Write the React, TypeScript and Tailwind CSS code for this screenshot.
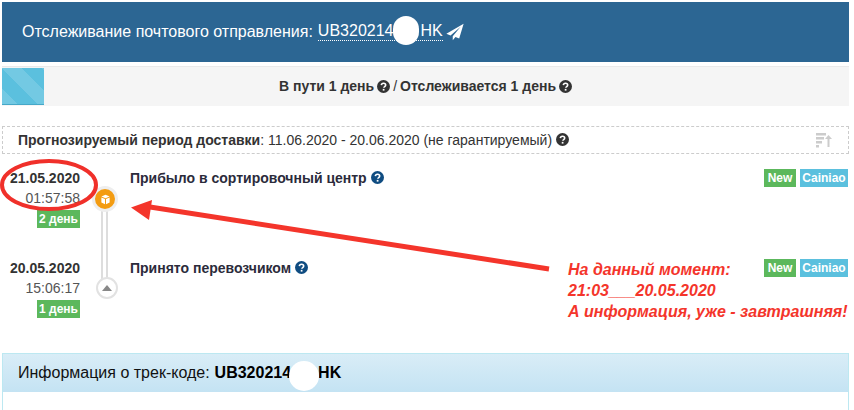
function Help({ className = 'text-[#333]' }: { className?: string }) {
  return (
    <svg viewBox="0 0 24 24" className={`inline-block w-[13px] h-[13px] align-[-1px] ${className}`}>
      <circle cx="12" cy="12" r="12" fill="currentColor" />
      <path d="M8 9.5a4 4 0 0 1 4-3.5c2.4 0 4 1.500 4 3.400 0 2.800-3.300 2.800-3.300 5" fill="none" stroke="#fff" strokeWidth="3" />
      <rect x="10.600" y="16.400" width="3.200" height="3.200" fill="#fff" />
    </svg>
  );
}

function Blot({ className }: { className: string }) {
  return <span className={`absolute rounded-full bg-white ${className}`} />;
}

function Tags() {
  return (
    <div className="flex gap-[4px] mr-[1px] text-[12px] leading-[18px] font-bold text-white">
      <span className="bg-[#5cb85c] w-[32px] text-center">New</span>
      <span className="bg-[#5bc0de] w-[48px] text-center">Cainiao</span>
    </div>
  );
}

const EVENTS = [
  { date: '21.05.2020', time: '01:57:58', days: '2 день', title: 'Прибыло в сортировочный центр' },
  { date: '20.05.2020', time: '15:06:17', days: '1 день', title: 'Принято перевозчиком' },
];

export default function App() {
  return (
    <div className="relative w-[854px] h-[410px] overflow-hidden bg-white font-['Liberation_Sans',Arial,sans-serif] text-[#333] pl-[2px] pr-[5px] pt-[2px]">
      {/* Header */}
      <div className="relative h-[60px] bg-[#2c6693] flex items-center pl-[20px] pb-[1px] text-[16px] text-white">
        <span>Отслеживание почтового отправления:</span>
        <span className="ml-[5px] border-b border-dotted border-white leading-[18px]">UB320214<span className="inline-block w-[27px]" />HK</span>
        <svg viewBox="0 0 24 24" className="ml-[3px] w-[18px] h-[18px]" fill="#fff">
          <path d="M23.500 1L.5 14.200l5.500 2.300L19.500 5 9 17.800V23l3.600-4.300 5 2.100z" />
        </svg>
        <Blot className="left-[391px] top-[14px] w-[26px] h-[29px]" />
      </div>

      {/* Status strip */}
      <div className="mt-[4px] h-[40px] bg-[#f5f5f5] border-t border-[#eaeaea] flex">
        <div className="w-[42px] mt-[1px] h-[37px] border-b border-[#46a8c8] bg-[#5bc0de] bg-[linear-gradient(45deg,#73c9e3_25%,transparent_25%,transparent_50%,#73c9e3_50%,#73c9e3_75%,transparent_75%)] bg-[length:40px_40px]" />
        <div className="flex-1 flex items-center justify-center text-[14px] font-bold pr-[42px] gap-[3px]">
          <span>В пути 1 день</span>
          <Help />
          <span className="font-normal">/</span>
          <span>Отслеживается 1 день</span>
          <Help />
        </div>
      </div>

      {/* Forecast */}
      <div className="mt-[20px] h-[28px] border border-dashed border-[#ccc] flex items-center justify-between pl-[15px] pr-[16px] text-[14px]">
        <span>
          <b>Прогнозируемый период доставки</b>: 11.06.2020 - 20.06.2020 (не гарантируемый) <Help />
        </span>
        <svg viewBox="0 0 16 16" className="w-[16px] h-[16px] text-[#ccc]" fill="currentColor">
          <rect x="0" y="1" width="10" height="2.500" />
          <rect x="0" y="5" width="8" height="2.500" />
          <rect x="0" y="9" width="6" height="2.500" />
          <rect x="0" y="13" width="3" height="2.500" />
          <path d="M12.500 3l3.500 4h-2.500v8h-2V7H9z" />
        </svg>
      </div>

      {/* Timeline */}
      <div className="mt-[14px] relative">
        <div className="absolute left-[99px] top-[40px] w-[7px] h-[74px] border-x-2 border-[#ddd] bg-white" />
        {EVENTS.map((e, i) => (
          <div key={e.date} className="flex h-[90px]">
            <div className="w-[78px] text-right text-[14px] leading-[20px]">
              <div className="font-bold">{e.date}</div>
              <div className="text-[#555]">{e.time}</div>
              <div className="flex justify-end mt-[2px]">
                <span className="bg-[#5cb85c] text-white font-bold text-[12px] leading-[18px] w-[43px] text-center">{e.days}</span>
              </div>
            </div>
            <div className="w-[50px] relative">
              {i === 0 ? (
                <span className="absolute top-[18px] left-[12px] w-[20px] h-[20px] rounded-full bg-[#f39c12] border-[3px] border-[#eee] box-content flex items-center justify-center">
                  <svg viewBox="0 0 16 16" className="w-[11px] h-[11px]" fill="#fff">
                    <path d="M8 1l6 2.600L8 6.200 2 3.600zM2 5l5.300 2.300V15L2 12.500zM14 5L8.700 7.300V15l5.300-2.500z" />
                  </svg>
                </span>
              ) : (
                <span className="absolute top-[19px] left-[16px] w-[18px] h-[18px] rounded-full bg-white border-[2px] border-[#e2e2e2] box-content flex items-center justify-center">
                  <span className="w-0 h-0 border-x-[5px] border-x-transparent border-b-[6px] border-b-[#888] -mt-[1px]" />
                </span>
              )}
            </div>
            <div className="flex-1 flex justify-between items-start pt-[1px]">
              <span className="text-[14px] font-bold leading-[18px] text-[#2b2b3b]">
                {e.title} <Help className="text-[#0f4c81]" />
              </span>
              <Tags />
            </div>
          </div>
        ))}
      </div>

      {/* Track info panel */}
      <div className="mt-[5px] border border-[#bce8f1] border-b-0 h-[60px]">
        <div className="relative h-[38px] bg-[linear-gradient(#d9edf7,#c4e3f3)] flex items-center pl-[15px] pb-[1px] text-[16px] text-[#111]">
          <span>Информация о трек-коде:</span>
          <b className="ml-[5px] text-black">UB320214<span className="inline-block w-[27px]" />HK</b>
          <Blot className="left-[286px] top-[7px] w-[30px] h-[30px]" />
        </div>
      </div>

      {/* Annotation drawn over the screenshot */}
      <svg viewBox="0 0 854 410" className="absolute inset-0 w-[854px] h-[410px] pointer-events-none">
        <ellipse cx="49" cy="185" rx="47" ry="24" fill="none" stroke="#f0302a" strokeWidth="4" />
        <path d="M549 269L150 207" stroke="#f4352b" strokeWidth="5" fill="none" />
        <path d="M131 207.500L152 200 149 220z" fill="#f4352b" />
      </svg>
      <div className="absolute left-[568px] top-[259px] text-[16px] leading-[21px] font-bold italic text-[#f4352b] whitespace-nowrap">
        <div>На данный момент:</div>
        <div>21:03___20.05.2020</div>
        <div>А информация, уже - завтрашняя!</div>
      </div>
    </div>
  );
}
